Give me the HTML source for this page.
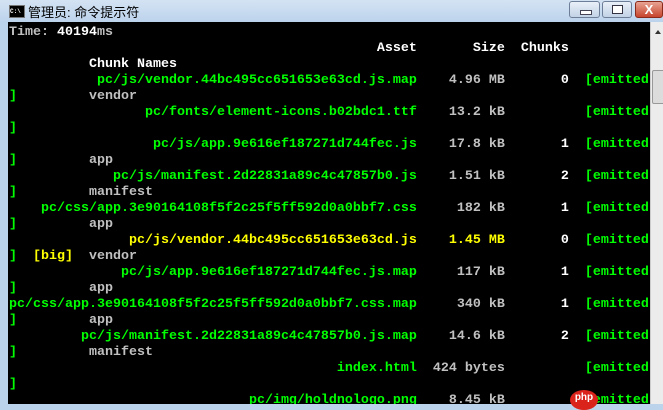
<!DOCTYPE html>
<html><head><meta charset="utf-8"><style>
html,body{margin:0;padding:0;width:663px;height:404px;overflow:hidden;background:#bcd3ec;}
#title{position:absolute;left:0;top:0;width:663px;height:22px;background:linear-gradient(#d4e3f3,#bcd3ec);}
#title .t{position:absolute;left:28px;top:2px;font:13px "Liberation Sans","Noto Sans CJK SC",sans-serif;color:#000;}
#icon{position:absolute;left:9px;top:5px;width:14px;height:11px;background:#000;border:1px solid #777;color:#fff;font:bold 6px "Liberation Mono",monospace;line-height:11px;}
.btn{position:absolute;top:1px;height:17px;border:1px solid #6d7f98;border-radius:3px;background:linear-gradient(#e9f0f8,#c2d2e6);box-sizing:border-box;}
#con{position:absolute;left:8px;top:22px;width:642px;height:382px;background:#000;overflow:hidden;}
pre{margin:0;position:absolute;left:1px;top:3px;font:bold 13.33px/16px "Liberation Mono",monospace;color:#c0c0c0;}
.g{color:#00ff00}.w{color:#fff}.y{color:#ffff00}
#sb{position:absolute;left:650px;top:22px;width:13px;height:382px;background:#ececec;border-left:1px solid #ccc;}
</style></head><body>
<div id="title"><div id="icon">C:\</div><div class="t">管理员: 命令提示符</div>
<div class="btn" style="left:569px;width:31px"><div style="position:absolute;left:10px;top:8px;width:10px;height:3px;background:#fff;border:1px solid #445"></div></div>
<div class="btn" style="left:602px;width:30px"><div style="position:absolute;left:9px;top:3px;width:9px;height:7px;border:1px solid #334;background:#fff"></div></div>
<div class="btn" style="left:635px;width:28px;background:linear-gradient(#e8a493,#c7452d);border-color:#8a2a1a;color:#fff;font:bold 13px 'Liberation Sans',sans-serif;text-align:center;line-height:15px">X</div>
</div>
<div id="con"><pre id="p"></pre></div>
<div style="position:absolute;left:570px;top:390px;width:28px;height:20px;border-radius:50%;background:#d9231b;color:#fff;font:bold 10px 'Liberation Sans',sans-serif;text-align:center;line-height:16px">php</div>
<div id="sb"><div style="position:absolute;left:4px;top:8px;width:0;height:0;border-left:3px solid transparent;border-right:3px solid transparent;border-bottom:4px solid #333"></div>
<div style="position:absolute;left:1px;top:48px;width:11px;height:32px;background:#dcdcdc;border:1px solid #999;border-radius:2px"></div></div>
<script>
function pad(s,n){while(s.length<n)s=' '+s;return s;}
function e(t){return t.replace(/&/g,'&amp;').replace(/</g,'&lt;');}
var rows=[
["pc/js/vendor.44bc495cc651653e63cd.js.map","4.96 MB","0","vendor","g"],
["pc/fonts/element-icons.b02bdc1.ttf","13.2 kB","","","g"],
["pc/js/app.9e616ef187271d744fec.js","17.8 kB","1","app","g"],
["pc/js/manifest.2d22831a89c4c47857b0.js","1.51 kB","2","manifest","g"],
["pc/css/app.3e90164108f5f2c25f5ff592d0a0bbf7.css","182 kB","1","app","g"],
["pc/js/vendor.44bc495cc651653e63cd.js","1.45 MB","0","vendor","y"],
["pc/js/app.9e616ef187271d744fec.js.map","117 kB","1","app","g"],
["pc/css/app.3e90164108f5f2c25f5ff592d0a0bbf7.css.map","340 kB","1","app","g"],
["pc/js/manifest.2d22831a89c4c47857b0.js.map","14.6 kB","2","manifest","g"],
["index.html","424 bytes","","","g"],
["pc/img/holdnologo.png","8.45 kB","","","g"]];
var h='Time: <span class="w">40194</span>ms\n';
h+='<span class="w">'+pad('Asset',51)+pad('Size',11)+pad('Chunks',8)+'</span>\n';
h+='<span class="w">          Chunk Names</span>\n';
rows.forEach(function(r){
 var c=r[4];
 h+='<span class="'+c+'">'+e(pad(r[0],51))+'</span>'+(c=='y'?'<span class="y">':'<span>')+pad(r[1],11)+'</span><span class="w">'+pad(r[2],8)+'</span><span class="g">  [emitted</span>\n';
 if(c=='y')h+='<span class="g">]</span>  <span class="y">[big]</span>  '+r[3]+'\n';
 else h+='<span class="g">]</span>         '+r[3]+'\n';
});
document.getElementById('p').innerHTML=h;
</script>
</body></html>
